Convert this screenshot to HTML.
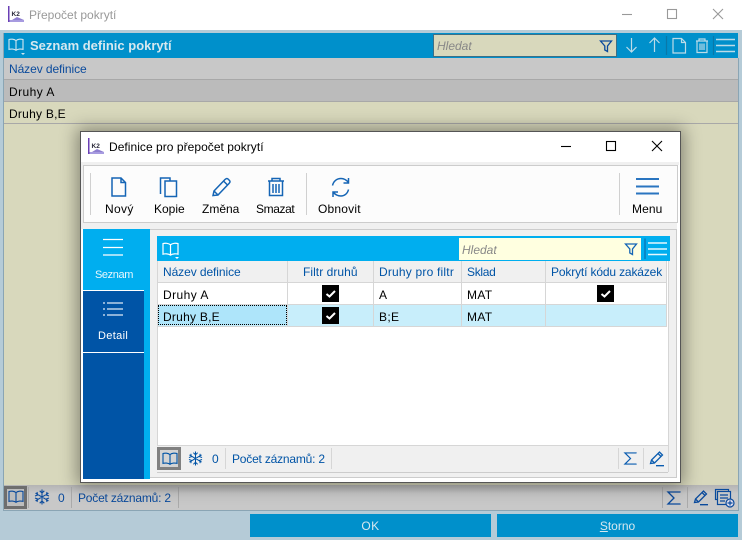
<!DOCTYPE html>
<html><head><meta charset="utf-8">
<style>
html,body{margin:0;padding:0}
body{width:742px;height:540px;overflow:hidden;position:relative;background:#b5cbd7;font-family:"Liberation Sans",Arial,sans-serif;font-size:12px;color:#000}
.a{position:absolute}
.t{position:absolute;white-space:nowrap;line-height:16px;letter-spacing:.35px}
svg{position:absolute;overflow:visible}
.b{color:#0a4a9c}
.ln{position:absolute;background:#d6d6d6}
</style></head><body>
<svg width="0" height="0" style="position:absolute">
<defs>
<symbol id="book" viewBox="0 0 18 16" overflow="visible"><path d="M9 3C7 1.200 3 1 1 1.700V13C3 12.300 7 12.500 9 14C11 12.500 15 12.300 17 13V1.700C15 1 11 1.200 9 3ZM9 3V14" fill="none" stroke="currentColor" stroke-width="1.300"/></symbol>
<symbol id="flake" viewBox="0 0 16 16" overflow="visible"><path d="M8 0.500V15.500M1.500 4.200L14.500 11.800M14.500 4.200L1.500 11.800M5.700 1.800L8 4L10.300 1.800M5.700 14.200L8 12L10.300 14.200M1 7L3.600 6L3 3M15 7L12.400 6L13 3M1 9L3.600 10L3 13M15 9L12.400 10L13 13" fill="none" stroke="currentColor" stroke-width="1.100"/></symbol>
<symbol id="sigma" viewBox="0 0 14 14" overflow="visible"><path d="M13 1.500V1H1L7 7L1 13H13V12.500" fill="none" stroke="currentColor" stroke-width="1.300"/></symbol>
<symbol id="pen" viewBox="0 0 16 16" overflow="visible"><path d="M1.500 12.500L2.500 9L10.500 1L13.500 4L5.500 12ZM2.500 9L5.500 12M9 2.500L12 5.500M7 14.700H15" fill="none" stroke="currentColor" stroke-width="1.300"/></symbol>
<symbol id="funnel" viewBox="0 0 12 12" overflow="visible"><path d="M0.500 1H11.500L7.500 6V11.500L4.800 10V6Z" fill="none" stroke="currentColor" stroke-width="1.300"/></symbol>
<symbol id="check" viewBox="0 0 17 17" overflow="visible"><rect width="17" height="17" fill="#000"/><path d="M4.500 9L7.500 11.500L13 6" fill="none" stroke="#fff" stroke-width="2"/></symbol>
<symbol id="logo" viewBox="0 0 16 16" overflow="visible"><rect x="0" y="0" width="16" height="16" fill="#fff"/><rect x="0" y="0" width="1.500" height="16" fill="#6a3fb5"/><rect x="1.500" y="14" width="14.500" height="2" fill="#a79be0"/><path d="M4 14L9 11L16 14H4Z" fill="#8f7fd0"/><text x="3.500" y="10" font-size="6.500" font-weight="bold" fill="#2a2a3a" font-family="Liberation Sans,sans-serif">K2</text></symbol>
</defs>
</svg>

<!-- outer title -->
<div class="a" style="left:0;top:0;width:742px;height:30px;background:#fff"></div>
<svg style="left:8px;top:6px" width="16" height="16"><use href="#logo" width="16" height="16"/></svg>
<div class="t" style="left:29px;top:7px;color:#999;font-size:12px;letter-spacing:0">Přepočet pokrytí</div>
<svg style="left:620px;top:8px" width="110" height="14" fill="none" stroke="#999" stroke-width="1.100">
<path d="M2 6.500H12"/><rect x="47.500" y="1.500" width="9" height="9"/><path d="M93 1L103 11M103 1L93 11"/></svg>

<!-- outer panel -->
<div class="a" style="left:3px;top:33px;width:735px;height:25px;background:#0090cb"></div>
<svg style="left:8px;top:38px;color:#cfe5ef" width="18" height="16"><use href="#book" width="16" height="14"/><path d="M13 15H17L15 17Z" fill="#cfe5ef"/></svg>
<div class="t" style="left:30px;top:38px;color:#d6e8ef;font-weight:bold;font-size:13px;letter-spacing:0">Seznam definic pokrytí</div>
<div class="a" style="left:433px;top:34px;width:182px;height:21px;background:#d8d8bc;border:1px solid #3d6f86"></div>
<div class="t" style="left:437px;top:38px;color:#888;font-style:italic;letter-spacing:0">Hledat</div>
<svg style="left:600px;top:40px;color:#0a4a9c" width="12" height="12"><use href="#funnel" width="12" height="12"/></svg>
<svg style="left:620px;top:33px" width="118" height="25" fill="none" stroke="#bcdbe8" stroke-width="1.200">
<path d="M11.500 5V19M6.500 14L11.500 19L16.500 14M34.500 19V5M29.500 10L34.500 5L39.500 10"/>
<path d="M46.500 3V22" stroke="#0a78a8"/><path d="M53 5.500H61.500L65.500 9.500V20H53ZM61.500 5.500V9.500H65.500"/>
<path d="M76 8H88M79 8V6H85V8M77 8.500V19.500H87V8.500M80 10.500V17M82 10.500V17M84 10.500V17"/>
<path d="M93.500 3V22" stroke="#0a78a8"/><path d="M96 6.500H115M96 12.500H115M96 18.500H115" stroke-width="1.500"/></svg>

<div class="a" style="left:3px;top:58px;width:735px;height:21px;background:#c8c8c8;border-bottom:1px solid #a8a8a8"></div>
<div class="t" style="left:9px;top:61px;color:#0a4a9c;letter-spacing:-.08px">Název definice</div>
<div class="a" style="left:3px;top:80px;width:735px;height:21px;background:#bbb;border-bottom:1px solid #a8a8a8"></div>
<div class="t" style="left:9px;top:84px;letter-spacing:.45px">Druhy A</div>
<div class="a" style="left:3px;top:102px;width:735px;height:21px;background:#d8d8bc;border-bottom:1px solid #a8a8a8"></div>
<div class="t" style="left:9px;top:106px;letter-spacing:.25px">Druhy B,E</div>
<div class="a" style="left:3px;top:124px;width:735px;height:361px;background:#d8d8bc"></div>
<div class="a" style="left:3px;top:485px;width:735px;height:25px;background:linear-gradient(#b4b4b4,#c8c8c8 35%)"></div>
<div class="a" style="left:3px;top:510px;width:736px;height:1px;background:#8aa5b4"></div>
<div class="a" style="left:3px;top:33px;width:1px;height:478px;background:#8aa5b4"></div>
<div class="a" style="left:738px;top:58px;width:1px;height:453px;background:#8aa5b4"></div>

<!-- outer status -->
<div class="a" style="left:4px;top:486px;width:17px;height:17px;border:3px solid #6e6e6e;background:#bdbdbd"></div>
<svg style="left:8px;top:490px;color:#0a4a9c" width="16" height="14"><use href="#book" width="16" height="14"/></svg>
<svg style="left:34px;top:489px;color:#0a4a9c" width="16" height="16"><use href="#flake" width="16" height="16"/></svg>
<div class="t b" style="left:58px;top:490px">0</div>
<div class="t b" style="left:78px;top:490px;letter-spacing:-.2px">Počet záznamů: 2</div>
<div class="ln" style="left:28px;top:487px;width:1px;height:21px;background:#aaa"></div>
<div class="ln" style="left:71px;top:487px;width:1px;height:21px;background:#aaa"></div>
<div class="ln" style="left:178px;top:487px;width:1px;height:21px;background:#aaa"></div>
<div class="ln" style="left:662px;top:487px;width:1px;height:21px;background:#aaa"></div>
<div class="ln" style="left:687px;top:487px;width:1px;height:21px;background:#aaa"></div>
<svg style="left:667px;top:491px;color:#0a4a9c" width="14" height="14"><use href="#sigma" width="14" height="14"/></svg>
<svg style="left:693px;top:490px;color:#0a4a9c" width="16" height="16"><use href="#pen" width="16" height="16"/></svg>
<svg style="left:715px;top:489px" width="22" height="20" fill="none" stroke="#0a4a9c" stroke-width="1.200"><rect x="0.500" y="0.500" width="13" height="10" fill="#bbb"/><rect x="2.500" y="2.500" width="13" height="13" fill="#c8c8c8"/><path d="M5 6H13M5 9H13M5 12H10"/><circle cx="15" cy="14" r="4" fill="#dde"/><path d="M12.500 14H17.500M15 11.500V16.500"/></svg>

<!-- buttons -->
<div class="a" style="left:250px;top:514px;width:241px;height:23px;background:#0090cb;color:#d6e8ef;text-align:center;line-height:24px;letter-spacing:.4px">OK</div>
<div class="a" style="left:497px;top:514px;width:241px;height:23px;background:#0090cb;color:#d6e8ef;text-align:center;line-height:24px;letter-spacing:0"><u>S</u>torno</div>

<!-- dialog -->
<div class="a" style="left:80px;top:131px;width:599px;height:350px;background:#fff;border:1px solid #555;box-shadow:0 0 16px 3px rgba(0,0,0,.38)"></div>
<div class="a" style="left:81px;top:162px;width:598px;height:3px;background:#f0f0f0"></div>
<div class="a" style="left:81px;top:165px;width:596px;height:64px;background:#f0f0f0"></div>
<div class="a" style="left:150px;top:229px;width:527px;height:249px;background:#f0f0f0;border-top:1px solid #ccc;border-bottom:1px solid #ccc;border-right:1px solid #ccc;box-sizing:border-box"></div>
<svg style="left:88px;top:138px" width="16" height="16"><use href="#logo" width="16" height="16"/></svg>
<div class="t" style="left:109px;top:139px;letter-spacing:.04px">Definice pro přepočet pokrytí</div>
<svg style="left:560px;top:140px" width="110" height="14" fill="none" stroke="#000" stroke-width="1.100"><path d="M1 6.500H11"/><rect x="46.500" y="1.500" width="9" height="9"/><path d="M92 1L102 11M102 1L92 11"/></svg>

<div class="a" style="left:83px;top:165px;width:593px;height:56px;background:#fcfcfc;border:1px solid #ccc"></div>
<div class="ln" style="left:90px;top:173px;width:1px;height:42px;background:#d0d0d0"></div>
<div class="ln" style="left:306px;top:173px;width:1px;height:42px;background:#d0d0d0"></div>
<div class="ln" style="left:619px;top:173px;width:1px;height:42px;background:#d0d0d0"></div>
<svg style="left:80px;top:170px" width="600" height="30" fill="none" stroke="#1565b5" stroke-width="1.500">
<path d="M32 8H41L45.500 12.500V26H32ZM41 8V12.500H45.500"/>
<path d="M80.500 24V8H90V11M85 11H96.500V26.500H85Z"/>
<path d="M133 25.500L134 21L145 9.500C146 8.500 147 8 148 9L149.500 10.500C150.500 11.500 150 12.500 149 13.500L138 25ZM134 21L138 25M143.500 11L147.500 15"/>
<path d="M188 11H204M192 11V8.500H200V11M189.500 11.500V25.500H202.500V11.500M193 14V23M196 14V23M199 14V23"/>
<path d="M252.500 15.500C253.500 11 257 8.500 261 8.500C264 8.500 266.500 10 268.500 12.500M268.500 8V13H263.500M268.500 19.500C267.500 24 264 26 261 26C258 26 255 24.500 253 22M253 27V22H258"/>
<path d="M556 9H579M556 16.500H579M556 23.500H579" stroke-width="2" stroke="#2a75c0"/></svg>
<div class="t" style="left:105px;top:201px">Nový</div>
<div class="t" style="left:154px;top:201px;letter-spacing:0">Kopie</div>
<div class="t" style="left:202px;top:201px;letter-spacing:0">Změna</div>
<div class="t" style="left:256px;top:201px;letter-spacing:-.4px">Smazat</div>
<div class="t" style="left:318px;top:201px;letter-spacing:.2px">Obnovit</div>
<div class="t" style="left:632px;top:201px;letter-spacing:.1px">Menu</div>

<!-- left nav -->
<div class="a" style="left:83px;top:229px;width:67px;height:250px;background:#00aeef"></div>
<div class="a" style="left:83px;top:291px;width:61px;height:188px;background:#0054a6"></div>
<div class="a" style="left:83px;top:290px;width:61px;height:1px;background:#fff"></div>
<div class="a" style="left:83px;top:352px;width:61px;height:1px;background:#fff"></div>
<svg style="left:103px;top:239px" width="22" height="18" stroke="#fff" stroke-width="1.300" fill="none"><path d="M0 .5H20M0 8.500H20M0 16H20"/></svg>
<svg style="left:103px;top:301px" width="22" height="18" stroke="#dfe9f5" stroke-width="1.300" fill="none"><path d="M4 2H20M4 8H20M4 14H20M0 2H2M0 8H2M0 14H2"/></svg>
<div class="t" style="left:95px;top:267px;color:#e8f7fd;font-size:11px;letter-spacing:-.4px">Seznam</div>
<div class="t" style="left:98px;top:328px;color:#fff;font-size:11px">Detail</div>

<!-- inner grid -->
<div class="a" style="left:157px;top:236px;width:511px;height:236px;background:#fff"></div>
<div class="a" style="left:157px;top:236px;width:513px;height:25px;background:#00aeef"></div>
<svg style="left:162px;top:242px;color:#fff" width="18" height="16"><use href="#book" width="17" height="15"/><path d="M13 15H17L15 17Z" fill="#fff"/></svg>
<div class="a" style="left:459px;top:238px;width:182px;height:22px;background:#ffffe0"></div>
<div class="t" style="left:462px;top:242px;color:#888;font-style:italic;letter-spacing:0">Hledat</div>
<svg style="left:625px;top:243px;color:#1565b5" width="12" height="12"><use href="#funnel" width="12" height="12"/></svg>
<svg style="left:645px;top:238px" width="24" height="22" fill="none" stroke="#e5f7fe" stroke-width="1.400"><path d="M0 .5V21" stroke="#0a78b8"/><path d="M3 5H22M3 11H22M3 16.500H22"/></svg>

<div class="a" style="left:157px;top:261px;width:510px;height:21px;background:#f0f0f0"></div>
<div class="a" style="left:157px;top:305px;width:510px;height:21px;background:#c8eefb"></div>
<div class="a" style="left:158px;top:305px;width:129px;height:20px;background:#aee5fa;outline:1px dotted #000;outline-offset:-1px"></div>
<div class="ln" style="left:157px;top:282px;width:510px;height:1px"></div>
<div class="ln" style="left:157px;top:304px;width:510px;height:1px"></div>
<div class="ln" style="left:157px;top:326px;width:510px;height:1px"></div>
<div class="ln" style="left:157px;top:261px;width:1px;height:66px"></div>
<div class="ln" style="left:287px;top:261px;width:1px;height:66px"></div>
<div class="ln" style="left:373px;top:261px;width:1px;height:66px"></div>
<div class="ln" style="left:461px;top:261px;width:1px;height:66px"></div>
<div class="ln" style="left:545px;top:261px;width:1px;height:66px"></div>
<div class="ln" style="left:666px;top:261px;width:1px;height:66px"></div>
<div class="ln" style="left:157px;top:327px;width:1px;height:118px"></div>
<div class="ln" style="left:668px;top:261px;width:1px;height:211px"></div>
<div class="t" style="left:163px;top:264px;color:#0054a6;letter-spacing:-.08px">Název definice</div>
<div class="t" style="left:303px;top:264px;color:#0054a6;letter-spacing:.05px">Filtr druhů</div>
<div class="t" style="left:379px;top:264px;color:#0054a6;letter-spacing:.2px">Druhy pro filtr</div>
<div class="t" style="left:467px;top:264px;color:#0054a6;letter-spacing:-.3px">Sklad</div>
<div class="t" style="left:551px;top:264px;color:#0054a6;letter-spacing:-.15px">Pokrytí kódu zakázek</div>
<div class="t" style="left:163px;top:287px;letter-spacing:.45px">Druhy A</div>
<div class="t" style="left:163px;top:309px;letter-spacing:.25px">Druhy B,E</div>
<div class="t" style="left:379px;top:287px">A</div>
<div class="t" style="left:379px;top:309px">B;E</div>
<div class="t" style="left:467px;top:287px">MAT</div>
<div class="t" style="left:467px;top:309px">MAT</div>
<svg style="left:322px;top:285px" width="17" height="17"><use href="#check" width="17" height="17"/></svg>
<svg style="left:322px;top:307px" width="17" height="17"><use href="#check" width="17" height="17"/></svg>
<svg style="left:597px;top:285px" width="17" height="17"><use href="#check" width="17" height="17"/></svg>

<!-- inner status -->
<div class="a" style="left:157px;top:445px;width:511px;height:28px;background:#f0f0f0;border-top:1px solid #d6d6d6;border-bottom:1px solid #ccc;box-sizing:border-box"></div>
<div class="a" style="left:157px;top:447px;width:18px;height:17px;border:3px solid #808080;background:#d4d4d4"></div>
<svg style="left:162px;top:452px;color:#0054a6" width="16" height="14"><use href="#book" width="16" height="14"/></svg>
<svg style="left:188px;top:451px;color:#0054a6" width="15" height="15"><use href="#flake" width="15" height="15"/></svg>
<div class="t" style="left:212px;top:451px;color:#0054a6">0</div>
<div class="t" style="left:232px;top:451px;color:#0054a6;letter-spacing:-.2px">Počet záznamů: 2</div>
<div class="ln" style="left:225px;top:448px;width:1px;height:21px"></div>
<div class="ln" style="left:331px;top:448px;width:1px;height:21px"></div>
<div class="ln" style="left:618px;top:448px;width:1px;height:21px"></div>
<div class="ln" style="left:643px;top:448px;width:1px;height:21px"></div>
<svg style="left:624px;top:452px;color:#0a5cb0" width="13" height="13"><use href="#sigma" width="13" height="13"/></svg>
<svg style="left:649px;top:451px;color:#0a5cb0" width="16" height="16"><use href="#pen" width="16" height="16"/></svg>
</body></html>
